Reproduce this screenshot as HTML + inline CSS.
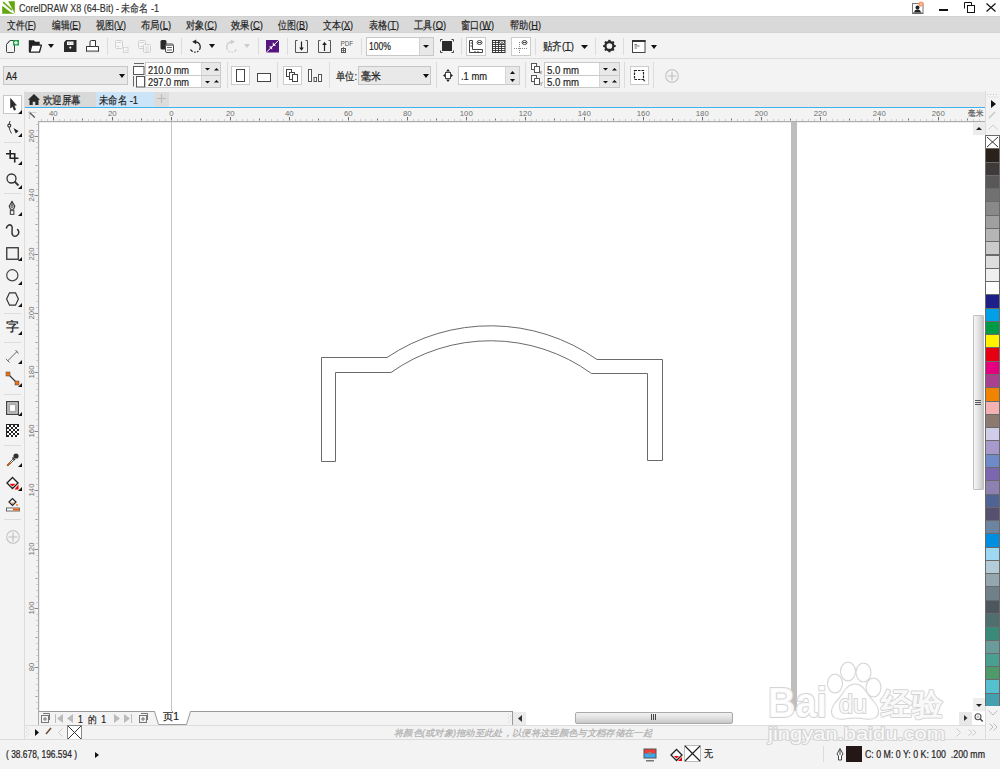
<!DOCTYPE html><html><head><meta charset="utf-8"><style>
*{margin:0;padding:0;box-sizing:border-box}
html,body{width:1000px;height:769px;overflow:hidden;background:#f3f3f3;font-family:"Liberation Sans",sans-serif;color:#222}
.a{position:absolute}
.t{position:absolute;white-space:nowrap;font-size:11px;line-height:12px;transform-origin:0 0;-webkit-text-stroke:0.2px currentColor}
svg{position:absolute;overflow:visible}
u{text-decoration:underline;text-underline-offset:0px}
</style></head><body><div class="a" style="left:0px;top:0px;width:1000px;height:16px;background:#fff"></div>
<svg style="left:2px;top:1px" width="13" height="13" viewBox="0 0 13 13"><path d="M6.2 0.2 H12.8 V12.4 Z" fill="#62a60e"/><path d="M0.2 4.8 V12.8 H12.4 L8.6 11.3 Z" fill="#62a60e"/><path d="M1.6 1.6 L9.6 8.6" stroke="#6cb020" stroke-width="1.7" stroke-linecap="round"/></svg>
<div class="t" id="t0" style="left:19px;top:2px;font-size:11px;color:#333;transform:scaleX(0.8200);">CorelDRAW X8 (64-Bit) - 未命名 -1</div>
<svg style="left:911px;top:1px" width="14" height="13"><rect x="1.5" y="2.5" width="10.5" height="10" fill="#fff" stroke="#777"/><circle cx="6.5" cy="6.5" r="2" fill="#222"/><path d="M3 11.5 Q3.5 8.5 6.5 8.5 Q9.5 8.5 10 11.5Z" fill="#222"/><path d="M2 12 H11.5" stroke="#555"/><circle cx="10" cy="3" r="2.6" fill="#f59a6a"/><circle cx="10" cy="3" r="1.2" fill="#fbc0a0"/></svg>
<div class="a" style="left:939px;top:9px;width:9px;height:2px;background:#111"></div>
<svg style="left:964px;top:2px" width="11" height="11"><path d="M0.5 6.5 V0.5 H7.5 V3" fill="none" stroke="#111"/><rect x="3.5" y="3.5" width="7" height="7" fill="none" stroke="#111"/></svg>
<svg style="left:986px;top:3px" width="10" height="9"><path d="M0.5 0.5 L9.5 8.5 M9.5 0.5 L0.5 8.5" stroke="#111" stroke-width="1.2"/></svg>
<div class="a" style="left:0px;top:16px;width:1000px;height:17px;background:#d9d9d9;border-top:1px solid #d2d2d2;border-bottom:1px solid #d4d4d4"></div>
<div class="t" id="t1" style="left:7px;top:19px;font-size:11px;color:#222;transform:scaleX(0.8038);">文件(<u>F</u>)</div>
<div class="t" id="t2" style="left:52px;top:19px;font-size:11px;color:#222;transform:scaleX(0.7905);">编辑(<u>E</u>)</div>
<div class="t" id="t3" style="left:96px;top:19px;font-size:11px;color:#222;transform:scaleX(0.8177);">视图(<u>V</u>)</div>
<div class="t" id="t4" style="left:141px;top:19px;font-size:11px;color:#222;transform:scaleX(0.8458);">布局(<u>L</u>)</div>
<div class="t" id="t5" style="left:186px;top:19px;font-size:11px;color:#222;transform:scaleX(0.8312);">对象(<u>C</u>)</div>
<div class="t" id="t6" style="left:231px;top:19px;font-size:11px;color:#222;transform:scaleX(0.8580);">效果(<u>C</u>)</div>
<div class="t" id="t7" style="left:278px;top:19px;font-size:11px;color:#222;transform:scaleX(0.8177);">位图(<u>B</u>)</div>
<div class="t" id="t8" style="left:323px;top:19px;font-size:11px;color:#222;transform:scaleX(0.8177);">文本(<u>X</u>)</div>
<div class="t" id="t9" style="left:369px;top:19px;font-size:11px;color:#222;transform:scaleX(0.8315);">表格(<u>T</u>)</div>
<div class="t" id="t10" style="left:414px;top:19px;font-size:11px;color:#222;transform:scaleX(0.8442);">工具(<u>O</u>)</div>
<div class="t" id="t11" style="left:461px;top:19px;font-size:11px;color:#222;transform:scaleX(0.8305);">窗口(<u>W</u>)</div>
<div class="t" id="t12" style="left:510px;top:19px;font-size:11px;color:#222;transform:scaleX(0.8312);">帮助(<u>H</u>)</div>
<div class="a" style="left:0px;top:58px;width:1000px;height:1px;background:#dcdcdc"></div>
<div class="a" style="left:107px;top:38px;width:1px;height:17px;background:#dcdcdc"></div>
<div class="a" style="left:181px;top:38px;width:1px;height:17px;background:#dcdcdc"></div>
<div class="a" style="left:258px;top:38px;width:1px;height:17px;background:#dcdcdc"></div>
<div class="a" style="left:287px;top:38px;width:1px;height:17px;background:#dcdcdc"></div>
<div class="a" style="left:361px;top:38px;width:1px;height:17px;background:#dcdcdc"></div>
<div class="a" style="left:461px;top:38px;width:1px;height:17px;background:#dcdcdc"></div>
<div class="a" style="left:535px;top:38px;width:1px;height:17px;background:#dcdcdc"></div>
<div class="a" style="left:595px;top:38px;width:1px;height:17px;background:#dcdcdc"></div>
<div class="a" style="left:623px;top:38px;width:1px;height:17px;background:#dcdcdc"></div>
<svg style="left:5px;top:40px" width="15" height="13" viewBox="0 0 15 13" ><path d="M5 0.5 H9.5 V11.5 Q9.5 12.5 8.5 12.5 H2.5 Q1.5 12.5 1.5 11.5 V4.5Z" fill="none" stroke="#444"/><path d="M1.5 4.5 L5 0.5" stroke="#444" fill="none"/><rect x="8" y="0" width="6" height="5.5" fill="#1ea04a"/><rect x="10.4" y="1" width="1.2" height="3.5" fill="#fff"/><rect x="9" y="2.2" width="4" height="1.2" fill="#fff"/></svg>
<svg style="left:29px;top:40px" width="13" height="13" viewBox="0 0 13 13" ><path d="M0.5 12 V1 H4.5 L6 2.5 H10 V5" fill="none" stroke="#222" stroke-width="1.4"/><path d="M0.5 1 H4.5 L6 2.5 H10 V5 H2.5 L0.5 11Z" fill="#222"/><path d="M0.8 12.2 L2.8 5.2 H12.4 L10.4 12.2Z" fill="#fff" stroke="#222" stroke-width="1.3" stroke-linejoin="round"/></svg>
<svg style="left:48px;top:44px" width="6" height="4" viewBox="0 0 6 4" ><path d="M0 0 H6 L3.0 4Z" fill="#111"/></svg>
<svg style="left:64px;top:40px" width="13" height="12" viewBox="0 0 13 12" ><path d="M2.2 0 H12.5 V12 H0 V2.2Z" fill="#2a2a2a"/><rect x="3" y="1.5" width="6.5" height="3.5" fill="#fff"/><rect x="4.5" y="2.3" width="1" height="2" fill="#999"/><rect x="7.5" y="2.3" width="1" height="2" fill="#bbb"/><circle cx="6.3" cy="7.6" r="1.1" fill="#fff"/></svg>
<svg style="left:86px;top:40px" width="13" height="13" viewBox="0 0 13 13" ><path d="M4 6.5 V2 Q4 0.5 5.5 0.5 H9.5 V6.5" fill="#fff" stroke="#333"/><path d="M0.5 6.5 H4 M9.5 6.5 H12.5 V11.5 H0.5 V6.5Z" fill="#fff" stroke="#333"/><rect x="1" y="10.3" width="11" height="1.8" fill="#888"/></svg>
<svg style="left:115px;top:40px" width="14" height="13" viewBox="0 0 14 13" ><rect x="0.5" y="0.5" width="7" height="8" rx="1" fill="#f6f6f6" stroke="#d0d0d0"/><path d="M2 2.5 H6 M2 6.5 H4" stroke="#d4d4d4"/><rect x="8.5" y="7.5" width="4.5" height="5" fill="#f6f6f6" stroke="#d6d6d6"/><path d="M10 10.5 H12" stroke="#ddd"/></svg>
<svg style="left:138px;top:40px" width="14" height="13" viewBox="0 0 14 13" ><rect x="0.5" y="0.5" width="7" height="8" rx="1" fill="#f6f6f6" stroke="#d0d0d0"/><path d="M2 2.5 H6 M2 6.5 H6" stroke="#d4d4d4"/><rect x="5.5" y="4.5" width="7" height="8" rx="1" fill="#f6f6f6" stroke="#d0d0d0"/><path d="M7 7 H11 M7 9 H11 M7 11 H11" stroke="#d8d8d8"/></svg>
<svg style="left:160px;top:40px" width="15" height="13" viewBox="0 0 15 13" ><rect x="0.5" y="0" width="6" height="9.5" rx="1.5" fill="#2a2a2a"/><rect x="5.5" y="4" width="8" height="8.5" rx="1.5" fill="#fff" stroke="#444"/><rect x="6" y="4.5" width="7" height="1.5" fill="#888"/><path d="M7 7.5 H12 M7 10 H12" stroke="#555" stroke-width="0.9"/></svg>
<svg style="left:189px;top:40px" width="14" height="13" viewBox="0 0 14 13" ><path d="M6 1.8 A5.2 5.2 0 1 1 1.5 9.5" fill="none" stroke="#222" stroke-width="1.3" stroke-dasharray="11 1.5 1.5 1.5 1.5 1.5"/><path d="M3.2 1.8 L7.2 -0.5 L7.2 4.2Z" fill="#222"/></svg>
<svg style="left:209px;top:44px" width="6" height="4" viewBox="0 0 6 4" ><path d="M0 0 H6 L3.0 4Z" fill="#111"/></svg>
<svg style="left:224px;top:40px" width="14" height="13" viewBox="0 0 14 13" ><path d="M8 1.8 A5.2 5.2 0 1 0 12.5 9.5" fill="none" stroke="#ccc" stroke-width="1.3" stroke-dasharray="11 1.5 1.5 1.5 1.5 1.5"/><path d="M10.8 1.8 L6.8 -0.5 L6.8 4.2Z" fill="#ccc"/></svg>
<svg style="left:244px;top:44px" width="6" height="4" viewBox="0 0 6 4" ><path d="M0 0 H6 L3.0 4Z" fill="#ccc"/></svg>
<svg style="left:266px;top:40px" width="13" height="13" viewBox="0 0 13 13" ><rect width="13" height="12.5" fill="#56167f"/><path d="M0.3 12.3 L12.7 0.3" stroke="#fff" stroke-width="1"/><path d="M6.8 2.6 V5.7 H10Z M6.1 9.6 V6.4 H2.9Z" fill="#fff"/></svg>
<svg style="left:295px;top:40px" width="13" height="13" viewBox="0 0 13 13" ><path d="M2.5 0.5 H0.5 V12.5 H12.5 V0.5 H10.5" fill="none" stroke="#555"/><path d="M6.5 1.5 V9" stroke="#222" stroke-width="1.2"/><path d="M4.2 7.5 L6.5 10.8 L8.8 7.5Z" fill="#222"/></svg>
<svg style="left:318px;top:40px" width="13" height="13" viewBox="0 0 13 13" ><path d="M2.5 0.5 H0.5 V12.5 H12.5 V0.5 H10.5" fill="none" stroke="#555"/><path d="M6.5 4 V11" stroke="#222" stroke-width="1.2"/><path d="M4.2 5 L6.5 1.8 L8.8 5Z" fill="#222"/></svg>
<svg style="left:340px;top:40px" width="14" height="7" viewBox="0 0 14 7" ><text x="0.5" y="6" font-family="Liberation Sans" font-size="7.2" fill="#555" textLength="12.5" lengthAdjust="spacingAndGlyphs">PDF</text></svg>
<svg style="left:341px;top:47px" width="5" height="6" viewBox="0 0 5 6" ><rect x="0.5" y="1.5" width="4" height="4" fill="none" stroke="#555"/><path d="M2.5 0 V6 M0 3.5 H5" stroke="#555" stroke-width="0.8"/></svg>
<div class="a" style="left:366px;top:37px;width:68px;height:19px;background:#fff;border:1px solid #c8c8c8"></div>
<div class="a" style="left:419px;top:38px;width:14px;height:17px;background:#e8e8e8;border-left:1px solid #d0d0d0"></div>
<svg style="left:423px;top:45px" width="6" height="3" viewBox="0 0 6 3" ><path d="M0 0 H6 L3.0 3Z" fill="#111"/></svg>
<div class="t" id="t13" style="left:369px;top:40px;font-size:11px;color:#222;transform:scaleX(0.7818);">100%</div>
<svg style="left:440px;top:39px" width="14" height="14" viewBox="0 0 14 14" ><rect x="2" y="2" width="10" height="10" fill="#2a2a2a"/><path d="M0.5 2.5 V0.5 H2.5 M11.5 0.5 H13.5 V2.5 M13.5 11.5 V13.5 H11.5 M2.5 13.5 H0.5 V11.5" fill="none" stroke="#444"/></svg>
<div class="a" style="left:466px;top:37px;width:20px;height:19px;background:#fff;border:1px solid #ccc"></div>
<svg style="left:469px;top:40px" width="14" height="13" viewBox="0 0 14 13" ><path d="M0.5 0.5 H3.5 V9.5 H13.5 V12.5 H0.5Z" fill="#fff" stroke="#444"/><path d="M1.5 3 H3 M1.5 6 H3 M6 11 V12 M9 11 V12" stroke="#444"/><ellipse cx="10.5" cy="2.5" rx="2.5" ry="2" fill="#fff" stroke="#444"/><path d="M9 2.5 H12" stroke="#444"/></svg>
<svg style="left:492px;top:40px" width="14" height="13" viewBox="0 0 14 13" ><rect x="0.5" y="0.5" width="12.5" height="12" fill="#fff" stroke="#333"/><path d="M0.5 2.5 H13 M0.5 4.5 H13 M0.5 6.5 H13 M0.5 8.5 H13 M0.5 10.5 H13 M3.5 0.5 V12.5 M6.5 0.5 V12.5 M9.5 0.5 V12.5" stroke="#333" stroke-width="0.9" fill="none"/><ellipse cx="10" cy="2.3" rx="2.6" ry="1.8" fill="#fff" stroke="#333" stroke-width="0.9"/><circle cx="10" cy="2.3" r="0.8" fill="#333"/></svg>
<div class="a" style="left:511px;top:37px;width:20px;height:19px;background:#fff;border:1px solid #ccc"></div>
<svg style="left:514px;top:40px" width="14" height="13" viewBox="0 0 14 13" ><path d="M5.5 2 V13 M0 8.5 H13" stroke="#888" stroke-dasharray="1 1" fill="none"/><ellipse cx="10.5" cy="2.5" rx="2.5" ry="2" fill="#fff" stroke="#444"/><path d="M9 2.5 H12" stroke="#444"/></svg>
<div class="t" id="t14" style="left:543px;top:40px;font-size:11px;color:#222;transform:scaleX(0.8592);">贴齐(<u>T</u>)</div>
<svg style="left:581px;top:45px" width="7" height="4" viewBox="0 0 7 4" ><path d="M0 0 H7 L3.5 4Z" fill="#111"/></svg>
<svg style="left:602px;top:40px" width="14" height="13" viewBox="0 0 14 13" ><rect x="6.3" y="-0.3" width="2.2" height="2.6" rx="0.6" fill="#2a2a2a" transform="rotate(0 7.4 6)"/><rect x="6.3" y="-0.3" width="2.2" height="2.6" rx="0.6" fill="#2a2a2a" transform="rotate(45 7.4 6)"/><rect x="6.3" y="-0.3" width="2.2" height="2.6" rx="0.6" fill="#2a2a2a" transform="rotate(90 7.4 6)"/><rect x="6.3" y="-0.3" width="2.2" height="2.6" rx="0.6" fill="#2a2a2a" transform="rotate(135 7.4 6)"/><rect x="6.3" y="-0.3" width="2.2" height="2.6" rx="0.6" fill="#2a2a2a" transform="rotate(180 7.4 6)"/><rect x="6.3" y="-0.3" width="2.2" height="2.6" rx="0.6" fill="#2a2a2a" transform="rotate(225 7.4 6)"/><rect x="6.3" y="-0.3" width="2.2" height="2.6" rx="0.6" fill="#2a2a2a" transform="rotate(270 7.4 6)"/><rect x="6.3" y="-0.3" width="2.2" height="2.6" rx="0.6" fill="#2a2a2a" transform="rotate(315 7.4 6)"/><circle cx="7.4" cy="6" r="4" fill="none" stroke="#2a2a2a" stroke-width="2.3"/></svg>
<svg style="left:632px;top:40px" width="14" height="13" viewBox="0 0 14 13" ><rect x="0.5" y="0.5" width="12.5" height="12" fill="#fff" stroke="#444" stroke-width="1"/><rect x="0" y="0" width="13.5" height="2" fill="#333"/><path d="M2.5 4.5 H5 M2.5 6 H7.5 M2.5 8 H5" stroke="#666" stroke-width="0.9"/></svg>
<svg style="left:651px;top:45px" width="6" height="4" viewBox="0 0 6 4" ><path d="M0 0 H6 L3.0 4Z" fill="#111"/></svg>
<div class="a" style="left:227px;top:62px;width:1px;height:26px;background:#dcdcdc"></div>
<div class="a" style="left:277px;top:62px;width:1px;height:26px;background:#dcdcdc"></div>
<div class="a" style="left:329px;top:62px;width:1px;height:26px;background:#dcdcdc"></div>
<div class="a" style="left:436px;top:62px;width:1px;height:26px;background:#dcdcdc"></div>
<div class="a" style="left:525px;top:62px;width:1px;height:26px;background:#dcdcdc"></div>
<div class="a" style="left:624px;top:62px;width:1px;height:26px;background:#dcdcdc"></div>
<div class="a" style="left:653px;top:62px;width:1px;height:26px;background:#dcdcdc"></div>
<div class="a" style="left:3px;top:66px;width:125px;height:19px;background:#e9e9e9;border:1px solid #c6c6c6"></div>
<div class="t" id="t15" style="left:6px;top:71px;font-size:10px;color:#222;transform:scaleX(0.8991);">A4</div>
<svg style="left:119px;top:74px" width="6" height="4" viewBox="0 0 6 4" ><path d="M0 0 H6 L3.0 4Z" fill="#111"/></svg>
<svg style="left:133px;top:63px" width="12" height="24" viewBox="0 0 12 24" ><path d="M1 0.5 H11" stroke="#666"/><rect x="0.5" y="3.5" width="10.5" height="8" fill="#fff" stroke="#555"/><path d="M0.5 13 V23.5" stroke="#666"/><rect x="3.5" y="13.5" width="8" height="10.5" fill="#fff" stroke="#555"/></svg>
<div class="a" style="left:145px;top:62px;width:76px;height:26px;background:#e8e8e8;border:1px solid #cacaca"></div>
<div class="a" style="left:146px;top:63px;width:56px;height:24px;background:#fff;border-right:1px solid #d6d6d6"></div>
<div class="a" style="left:146px;top:75px;width:74px;height:1px;background:#cacaca"></div>
<div class="t" id="t16" style="left:148px;top:64px;font-size:11px;line-height:13px;color:#222;transform:scaleX(0.8381);">210.0 mm</div>
<div class="t" id="t17" style="left:148px;top:76px;font-size:11px;line-height:13px;color:#222;transform:scaleX(0.8381);">297.0 mm</div>
<svg style="left:205px;top:68px" width="5" height="2.6" viewBox="0 0 5 2.6" ><path d="M0 0 H5 L2.5 2.6Z" fill="#111"/></svg>
<svg style="left:214px;top:67.8px" width="5" height="2.6" viewBox="0 0 5 2.6" ><path d="M0 2.6 H5 L2.5 0Z" fill="#111"/></svg>
<svg style="left:205px;top:80.5px" width="5" height="2.6" viewBox="0 0 5 2.6" ><path d="M0 0 H5 L2.5 2.6Z" fill="#111"/></svg>
<svg style="left:214px;top:80.3px" width="5" height="2.6" viewBox="0 0 5 2.6" ><path d="M0 2.6 H5 L2.5 0Z" fill="#111"/></svg>
<div class="a" style="left:544px;top:62px;width:76px;height:26px;background:#e8e8e8;border:1px solid #cacaca"></div>
<div class="a" style="left:545px;top:63px;width:55px;height:24px;background:#fff;border-right:1px solid #d6d6d6"></div>
<div class="a" style="left:545px;top:75px;width:74px;height:1px;background:#cacaca"></div>
<div class="t" id="t18" style="left:547px;top:64px;font-size:11px;line-height:13px;color:#222;transform:scaleX(0.8722);">5.0 mm</div>
<div class="t" id="t19" style="left:547px;top:76px;font-size:11px;line-height:13px;color:#222;transform:scaleX(0.8722);">5.0 mm</div>
<svg style="left:603px;top:68px" width="5" height="2.6" viewBox="0 0 5 2.6" ><path d="M0 0 H5 L2.5 2.6Z" fill="#111"/></svg>
<svg style="left:612px;top:67.8px" width="5" height="2.6" viewBox="0 0 5 2.6" ><path d="M0 2.6 H5 L2.5 0Z" fill="#111"/></svg>
<svg style="left:603px;top:80.5px" width="5" height="2.6" viewBox="0 0 5 2.6" ><path d="M0 0 H5 L2.5 2.6Z" fill="#111"/></svg>
<svg style="left:612px;top:80.3px" width="5" height="2.6" viewBox="0 0 5 2.6" ><path d="M0 2.6 H5 L2.5 0Z" fill="#111"/></svg>
<div class="a" style="left:231px;top:66px;width:19px;height:19px;background:#fff;border:1px solid #ccc"></div>
<svg style="left:236px;top:69px" width="9" height="13" viewBox="0 0 9 13" ><rect x="0.5" y="0.5" width="8" height="12" fill="#fff" stroke="#444"/></svg>
<svg style="left:257px;top:73px" width="14" height="9" viewBox="0 0 14 9" ><rect x="0.5" y="0.5" width="13" height="8" fill="#fff" stroke="#444"/></svg>
<div class="a" style="left:283px;top:66px;width:19px;height:19px;background:#fff;border:1px solid #ccc"></div>
<svg style="left:286px;top:69px" width="13" height="13" viewBox="0 0 13 13" ><rect x="0.5" y="0.5" width="5" height="7" fill="#fff" stroke="#444"/><rect x="3.5" y="3.5" width="5" height="7" fill="#fff" stroke="#444"/><rect x="6.5" y="5.5" width="5" height="7" fill="#fff" stroke="#444"/></svg>
<svg style="left:308px;top:69px" width="14" height="14" viewBox="0 0 14 14" ><rect x="0.5" y="0.5" width="3" height="12" fill="#fff" stroke="#555"/><rect x="6" y="8.5" width="2.5" height="4" fill="#fff" stroke="#555"/><rect x="10.5" y="5.5" width="3" height="7" fill="#fff" stroke="#555"/></svg>
<div class="t" id="t20" style="left:336px;top:70px;font-size:11px;color:#222;transform:scaleX(0.8379);">单位:</div>
<div class="a" style="left:358px;top:66px;width:73px;height:19px;background:#e9e9e9;border:1px solid #c6c6c6"></div>
<div class="t" id="t21" style="left:361px;top:70px;font-size:11px;color:#222;transform:scaleX(0.9091);">毫米</div>
<svg style="left:423px;top:74px" width="6" height="4" viewBox="0 0 6 4" ><path d="M0 0 H6 L3.0 4Z" fill="#111"/></svg>
<svg style="left:443px;top:69px" width="10" height="13" viewBox="0 0 10 13" ><path d="M5 0 L7 2.5 H3Z M5 13 L7 10.5 H3Z M0 6.5 L2.5 4.5 V8.5Z M10 6.5 L7.5 4.5 V8.5Z" fill="#222"/><rect x="2.5" y="3.5" width="5" height="6" fill="#fff" stroke="#444"/></svg>
<div class="a" style="left:458px;top:66px;width:62px;height:19px;background:#e8e8e8;border:1px solid #cacaca"></div>
<div class="a" style="left:459px;top:67px;width:47px;height:17px;background:#fff;border-right:1px solid #d6d6d6"></div>
<div class="t" id="t22" style="left:461px;top:70px;font-size:11px;color:#222;transform:scaleX(0.8507);">.1 mm</div>
<svg style="left:510px;top:71px" width="5" height="3" viewBox="0 0 5 3" ><path d="M0 3 H5 L2.5 0Z" fill="#111"/></svg>
<svg style="left:510px;top:79px" width="5" height="3" viewBox="0 0 5 3" ><path d="M0 0 H5 L2.5 3Z" fill="#111"/></svg>
<svg style="left:531px;top:63px" width="12" height="24" viewBox="0 0 12 24" ><rect x="0.5" y="0.5" width="5" height="6" fill="#fff" stroke="#555"/><rect x="3.5" y="3.5" width="5" height="6" fill="#fff" stroke="#555"/><text x="8.5" y="11" font-size="5" fill="#555" font-family="Liberation Sans">x</text><rect x="0.5" y="12.5" width="5" height="6" fill="#fff" stroke="#555"/><rect x="3.5" y="15.5" width="5" height="6" fill="#fff" stroke="#555"/><text x="8.5" y="23" font-size="5" fill="#555" font-family="Liberation Sans">Y</text></svg>
<div class="a" style="left:630px;top:66px;width:19px;height:19px;background:#fff;border:1px solid #ccc"></div>
<svg style="left:633px;top:69px" width="13" height="13" viewBox="0 0 13 13" ><rect x="1.5" y="1.5" width="9" height="9" fill="none" stroke="#222" stroke-width="1.2" stroke-dasharray="2.5 1"/><path d="M10 9 L12.5 12.5 L10.5 12Z" fill="#222"/></svg>
<svg style="left:665px;top:69px" width="14" height="14" viewBox="0 0 14 14" ><circle cx="7" cy="7" r="6.3" fill="none" stroke="#c8c8c8" stroke-width="1.2"/><path d="M7 2.5 V11.5 M2.5 7 H11.5" stroke="#c0c0c0" stroke-width="1.2"/></svg>
<div class="a" style="left:24px;top:91px;width:1px;height:648px;background:#dcdcdc"></div>
<div class="a" style="left:4px;top:142px;width:17px;height:1px;background:#dcdcdc"></div>
<div class="a" style="left:4px;top:193px;width:17px;height:1px;background:#dcdcdc"></div>
<div class="a" style="left:4px;top:313px;width:17px;height:1px;background:#dcdcdc"></div>
<div class="a" style="left:4px;top:342px;width:17px;height:1px;background:#dcdcdc"></div>
<div class="a" style="left:4px;top:394px;width:17px;height:1px;background:#dcdcdc"></div>
<div class="a" style="left:4px;top:445px;width:17px;height:1px;background:#dcdcdc"></div>
<div class="a" style="left:4px;top:519px;width:17px;height:1px;background:#dcdcdc"></div>
<div class="a" style="left:3px;top:95px;width:19px;height:19px;background:#fff;border:1px solid #c8c8c8"></div>
<svg style="left:10px;top:98px" width="7" height="13" viewBox="0 0 7 13" ><path d="M0.6 0.6 L6.4 7.2 H4 L5.6 11.6 L4.2 12.2 L2.6 8.2 L0.6 10Z" fill="#2a2a2a" stroke="#2a2a2a" stroke-width="0.7" stroke-linejoin="round"/></svg>
<svg style="left:17.5px;top:110px" width="4" height="4" viewBox="0 0 4 4" ><path d="M4 0 V4 H0Z" fill="#111"/></svg>
<svg style="left:6px;top:121px" width="15" height="16" viewBox="0 0 15 16" ><path d="M4 0 Q1.5 6 5.5 12.5" fill="none" stroke="#444"/><circle cx="3.3" cy="4.6" r="1.5" fill="#fff" stroke="#333" stroke-width="1.1"/><path d="M7.5 7 L12.5 10 L9.8 12.5Z" fill="#222"/></svg>
<svg style="left:17.5px;top:133px" width="4" height="4" viewBox="0 0 4 4" ><path d="M4 0 V4 H0Z" fill="#111"/></svg>
<svg style="left:6px;top:150px" width="14" height="14" viewBox="0 0 14 14" ><path d="M4.2 0 V8.3 H12.4 M0 3.7 H8.7 V12.6" fill="none" stroke="#222" stroke-width="1.6"/></svg>
<svg style="left:17.5px;top:161px" width="4" height="4" viewBox="0 0 4 4" ><path d="M4 0 V4 H0Z" fill="#111"/></svg>
<svg style="left:6px;top:173px" width="14" height="15" viewBox="0 0 14 15" ><circle cx="5.5" cy="5.5" r="4.5" fill="none" stroke="#333" stroke-width="1.3"/><path d="M8.5 8.5 L12.5 12.5" stroke="#333" stroke-width="1.8"/></svg>
<svg style="left:17.5px;top:185px" width="4" height="4" viewBox="0 0 4 4" ><path d="M4 0 V4 H0Z" fill="#111"/></svg>
<svg style="left:8px;top:201px" width="8" height="14" viewBox="0 0 8 14" ><path d="M4 0.5 L6.8 5 L5.6 8.3 H2.4 L1.2 5Z" fill="#fff" stroke="#333" stroke-width="1.1"/><circle cx="4" cy="5.2" r="1.2" fill="none" stroke="#333" stroke-width="0.9"/><path d="M4 0.5 V4" stroke="#333"/><rect x="2.3" y="9.7" width="3.6" height="3.6" fill="#fff" stroke="#333"/></svg>
<svg style="left:17.5px;top:212px" width="4" height="4" viewBox="0 0 4 4" ><path d="M4 0 V4 H0Z" fill="#111"/></svg>
<svg style="left:6px;top:220px" width="14" height="17" viewBox="0 0 14 17" ><path d="M0.3 8.5 C1 5 4.5 3.5 6 6.5 C7 9 4.5 13 7 15.5 C9.5 17.5 13 15 12.8 12 C12.7 10.5 11.5 9.5 11 9.3" fill="none" stroke="#333" stroke-width="1.5"/></svg>
<svg style="left:6px;top:247px" width="13" height="13" viewBox="0 0 13 13" ><rect x="0.75" y="0.75" width="11.5" height="11.5" fill="none" stroke="#333" stroke-width="1.3"/></svg>
<svg style="left:17.5px;top:257px" width="4" height="4" viewBox="0 0 4 4" ><path d="M4 0 V4 H0Z" fill="#111"/></svg>
<svg style="left:6px;top:269px" width="13" height="14" viewBox="0 0 13 14" ><circle cx="6.3" cy="6.3" r="5.6" fill="none" stroke="#444" stroke-width="1.2"/></svg>
<svg style="left:17.5px;top:281px" width="4" height="4" viewBox="0 0 4 4" ><path d="M4 0 V4 H0Z" fill="#111"/></svg>
<svg style="left:6px;top:292px" width="13" height="14" viewBox="0 0 13 14" ><path d="M3.5 0.8 H9.5 L12.4 7 L9.5 13.2 H3.5 L0.6 7Z" fill="none" stroke="#333" stroke-width="1.2"/></svg>
<svg style="left:17.5px;top:303px" width="4" height="4" viewBox="0 0 4 4" ><path d="M4 0 V4 H0Z" fill="#111"/></svg>
<div class="t" style="left:6px;top:319px;font-size:13px;line-height:15px;color:#222;-webkit-text-stroke:0.3px #222">字</div>
<svg style="left:17.5px;top:331px" width="4" height="4" viewBox="0 0 4 4" ><path d="M4 0 V4 H0Z" fill="#111"/></svg>
<svg style="left:6px;top:350px" width="13" height="13" viewBox="0 0 13 13" ><path d="M1.5 11 L11 1.5 M0 9 L3.5 12.5 M9.5 0 L12.5 3.5" stroke="#666" stroke-width="1"/></svg>
<svg style="left:17.5px;top:360px" width="4" height="4" viewBox="0 0 4 4" ><path d="M4 0 V4 H0Z" fill="#111"/></svg>
<svg style="left:6px;top:372px" width="13" height="14" viewBox="0 0 13 14" ><path d="M2 2 L11 11" stroke="#333" stroke-width="1.1"/><rect x="0" y="0" width="4" height="4" fill="#f07010" stroke="#444" stroke-width="0.5"/><rect x="9" y="9" width="4" height="4" fill="#f07010" stroke="#444" stroke-width="0.5"/></svg>
<svg style="left:17.5px;top:383px" width="4" height="4" viewBox="0 0 4 4" ><path d="M4 0 V4 H0Z" fill="#111"/></svg>
<svg style="left:6px;top:401px" width="13" height="14" viewBox="0 0 13 14" ><rect x="0.5" y="0.5" width="12" height="13" fill="#888" stroke="#444"/><rect x="1.5" y="1.5" width="10" height="11" fill="#ddd"/><rect x="2.5" y="2.5" width="8" height="9" fill="#888"/><rect x="3.5" y="3.5" width="6" height="7" fill="#eee" stroke="#aaa" stroke-width="1"/><rect x="4.5" y="4.5" width="4" height="5" fill="#fff"/></svg>
<svg style="left:17.5px;top:412px" width="4" height="4" viewBox="0 0 4 4" ><path d="M4 0 V4 H0Z" fill="#111"/></svg>
<svg style="left:6px;top:424px" width="13" height="13" viewBox="0 0 13 13" ><rect width="13" height="13" fill="#222"/><rect x="1" y="1" width="2" height="2" fill="#fff"/><rect x="1" y="5" width="2" height="2" fill="#fff"/><rect x="1" y="9" width="2" height="2" fill="#fff"/><rect x="3" y="3" width="2" height="2" fill="#fff"/><rect x="3" y="7" width="2" height="2" fill="#fff"/><rect x="3" y="11" width="2" height="2" fill="#fff"/><rect x="5" y="1" width="2" height="2" fill="#fff"/><rect x="5" y="5" width="2" height="2" fill="#fff"/><rect x="5" y="9" width="2" height="2" fill="#fff"/><rect x="7" y="3" width="2" height="2" fill="#fff"/><rect x="7" y="7" width="2" height="2" fill="#fff"/><rect x="7" y="11" width="2" height="2" fill="#fff"/><rect x="9" y="1" width="2" height="2" fill="#fff"/><rect x="9" y="5" width="2" height="2" fill="#fff"/><rect x="9" y="9" width="2" height="2" fill="#fff"/><rect x="11" y="3" width="2" height="2" fill="#fff"/><rect x="11" y="7" width="2" height="2" fill="#fff"/><rect x="11" y="11" width="2" height="2" fill="#fff"/></svg>
<svg style="left:6px;top:453px" width="13" height="14" viewBox="0 0 13 14" ><path d="M1.5 12.8 L1 12 L7.5 5.5 L8.5 6.5 L2 13Z" fill="#fff" stroke="#444" stroke-width="0.9"/><path d="M1.6 12.4 L4.5 9.5" stroke="#e06010" stroke-width="1.6"/><circle cx="10" cy="3" r="2.6" fill="#333"/><path d="M6.5 4.5 L9 7" stroke="#333" stroke-width="1.5"/></svg>
<svg style="left:17.5px;top:463px" width="4" height="4" viewBox="0 0 4 4" ><path d="M4 0 V4 H0Z" fill="#111"/></svg>
<svg style="left:6px;top:476px" width="14" height="14" viewBox="0 0 14 14" ><path d="M1 7 L6.5 1.5 L12 7 L6.5 12.5Z" fill="#fff" stroke="#222" stroke-width="1.4"/><path d="M3.5 7.8 H9.5 L6.5 10.5Z" fill="#e00"/><path d="M12.5 8.5 V13.5 H8.5Z" fill="#e00"/></svg>
<svg style="left:17.5px;top:487px" width="4" height="4" viewBox="0 0 4 4" ><path d="M4 0 V4 H0Z" fill="#111"/></svg>
<svg style="left:6px;top:497px" width="14" height="15" viewBox="0 0 14 15" ><path d="M3 5 L6.5 1.5 L10 5 L6.5 8.5Z" fill="#fff" stroke="#222" stroke-width="1.2"/><path d="M5 5.5 H8 L6.5 7Z" fill="#f07010"/><rect x="0.5" y="11" width="13" height="3" fill="#fff" stroke="#444" stroke-width="0.8"/><rect x="7" y="11.5" width="6.5" height="2" fill="#e86010"/><circle cx="11" cy="8" r="0.9" fill="#f07010"/></svg>
<svg style="left:6px;top:530px" width="14" height="14" viewBox="0 0 14 14" ><circle cx="7" cy="7" r="6.3" fill="none" stroke="#c8c8c8" stroke-width="1.2"/><path d="M7 2.5 V11.5 M2.5 7 H11.5" stroke="#c0c0c0" stroke-width="1.2"/></svg>
<div class="a" style="left:25px;top:92px;width:960px;height:15px;background:#e8e8e8"></div>
<div class="a" style="left:25px;top:92px;width:71px;height:15px;background:#d9d9d9"></div>
<div class="a" style="left:96px;top:92px;width:58px;height:15px;background:#cce4f7"></div>
<div class="a" style="left:154px;top:92px;width:15px;height:15px;background:#dcdcdc"></div>
<svg style="left:28px;top:94px" width="12" height="11"><path d="M6 0 L12 5.8 L10.5 5.8 L10.5 11 L7.3 11 L7.3 7.8 L4.7 7.8 L4.7 11 L1.5 11 L1.5 5.8 L0 5.8Z" fill="#2a2a2a"/></svg>
<div class="t" id="t23" style="left:43px;top:94px;font-size:11px;color:#222;transform:scaleX(0.8636);">欢迎屏幕</div>
<div class="t" id="t24" style="left:99px;top:94px;font-size:11px;color:#222;transform:scaleX(0.8507);">未命名 -1</div>
<svg style="left:156px;top:93px" width="11" height="11"><path d="M5.5 1 V10 M1 5.5 H10" stroke="#bbb" stroke-width="1.2"/></svg>
<div class="a" style="left:25px;top:107px;width:960px;height:1px;background:#3cb2ef"></div>
<div class="a" style="left:25px;top:108px;width:960px;height:13px;background:#f3f3f3"></div>
<div class="a" style="left:25px;top:108px;width:13px;height:616px;background:#f3f3f3"></div>
<div class="a" style="left:38px;top:121px;width:1px;height:604px;background:#acacac"></div>
<svg style="left:0;top:0" width="1000" height="130"><g><line x1="41.5" y1="119" x2="41.5" y2="121" stroke="#cfcfcf"/><line x1="47.5" y1="119" x2="47.5" y2="121" stroke="#cfcfcf"/><line x1="53.5" y1="117" x2="53.5" y2="120.5" stroke="#707070"/><line x1="59.5" y1="119" x2="59.5" y2="121" stroke="#cfcfcf"/><line x1="64.5" y1="119" x2="64.5" y2="121" stroke="#cfcfcf"/><line x1="70.5" y1="119" x2="70.5" y2="121" stroke="#cfcfcf"/><line x1="76.5" y1="119" x2="76.5" y2="121" stroke="#cfcfcf"/><line x1="82.5" y1="118.5" x2="82.5" y2="120.5" stroke="#777"/><line x1="88.5" y1="119" x2="88.5" y2="121" stroke="#cfcfcf"/><line x1="94.5" y1="119" x2="94.5" y2="121" stroke="#cfcfcf"/><line x1="100.5" y1="119" x2="100.5" y2="121" stroke="#cfcfcf"/><line x1="106.5" y1="119" x2="106.5" y2="121" stroke="#cfcfcf"/><line x1="112.5" y1="117" x2="112.5" y2="120.5" stroke="#707070"/><line x1="118.5" y1="119" x2="118.5" y2="121" stroke="#cfcfcf"/><line x1="124.5" y1="119" x2="124.5" y2="121" stroke="#cfcfcf"/><line x1="129.5" y1="119" x2="129.5" y2="121" stroke="#cfcfcf"/><line x1="135.5" y1="119" x2="135.5" y2="121" stroke="#cfcfcf"/><line x1="141.5" y1="118.5" x2="141.5" y2="120.5" stroke="#777"/><line x1="147.5" y1="119" x2="147.5" y2="121" stroke="#cfcfcf"/><line x1="153.5" y1="119" x2="153.5" y2="121" stroke="#cfcfcf"/><line x1="159.5" y1="119" x2="159.5" y2="121" stroke="#cfcfcf"/><line x1="165.5" y1="119" x2="165.5" y2="121" stroke="#cfcfcf"/><line x1="171.5" y1="117" x2="171.5" y2="120.5" stroke="#707070"/><line x1="177.5" y1="119" x2="177.5" y2="121" stroke="#cfcfcf"/><line x1="182.5" y1="119" x2="182.5" y2="121" stroke="#cfcfcf"/><line x1="188.5" y1="119" x2="188.5" y2="121" stroke="#cfcfcf"/><line x1="194.5" y1="119" x2="194.5" y2="121" stroke="#cfcfcf"/><line x1="200.5" y1="118.5" x2="200.5" y2="120.5" stroke="#777"/><line x1="206.5" y1="119" x2="206.5" y2="121" stroke="#cfcfcf"/><line x1="212.5" y1="119" x2="212.5" y2="121" stroke="#cfcfcf"/><line x1="218.5" y1="119" x2="218.5" y2="121" stroke="#cfcfcf"/><line x1="224.5" y1="119" x2="224.5" y2="121" stroke="#cfcfcf"/><line x1="230.5" y1="117" x2="230.5" y2="120.5" stroke="#707070"/><line x1="236.5" y1="119" x2="236.5" y2="121" stroke="#cfcfcf"/><line x1="242.5" y1="119" x2="242.5" y2="121" stroke="#cfcfcf"/><line x1="247.5" y1="119" x2="247.5" y2="121" stroke="#cfcfcf"/><line x1="253.5" y1="119" x2="253.5" y2="121" stroke="#cfcfcf"/><line x1="259.5" y1="118.5" x2="259.5" y2="120.5" stroke="#777"/><line x1="265.5" y1="119" x2="265.5" y2="121" stroke="#cfcfcf"/><line x1="271.5" y1="119" x2="271.5" y2="121" stroke="#cfcfcf"/><line x1="277.5" y1="119" x2="277.5" y2="121" stroke="#cfcfcf"/><line x1="283.5" y1="119" x2="283.5" y2="121" stroke="#cfcfcf"/><line x1="289.5" y1="117" x2="289.5" y2="120.5" stroke="#707070"/><line x1="295.5" y1="119" x2="295.5" y2="121" stroke="#cfcfcf"/><line x1="300.5" y1="119" x2="300.5" y2="121" stroke="#cfcfcf"/><line x1="306.5" y1="119" x2="306.5" y2="121" stroke="#cfcfcf"/><line x1="312.5" y1="119" x2="312.5" y2="121" stroke="#cfcfcf"/><line x1="318.5" y1="118.5" x2="318.5" y2="120.5" stroke="#777"/><line x1="324.5" y1="119" x2="324.5" y2="121" stroke="#cfcfcf"/><line x1="330.5" y1="119" x2="330.5" y2="121" stroke="#cfcfcf"/><line x1="336.5" y1="119" x2="336.5" y2="121" stroke="#cfcfcf"/><line x1="342.5" y1="119" x2="342.5" y2="121" stroke="#cfcfcf"/><line x1="348.5" y1="117" x2="348.5" y2="120.5" stroke="#707070"/><line x1="354.5" y1="119" x2="354.5" y2="121" stroke="#cfcfcf"/><line x1="360.5" y1="119" x2="360.5" y2="121" stroke="#cfcfcf"/><line x1="365.5" y1="119" x2="365.5" y2="121" stroke="#cfcfcf"/><line x1="371.5" y1="119" x2="371.5" y2="121" stroke="#cfcfcf"/><line x1="377.5" y1="118.5" x2="377.5" y2="120.5" stroke="#777"/><line x1="383.5" y1="119" x2="383.5" y2="121" stroke="#cfcfcf"/><line x1="389.5" y1="119" x2="389.5" y2="121" stroke="#cfcfcf"/><line x1="395.5" y1="119" x2="395.5" y2="121" stroke="#cfcfcf"/><line x1="401.5" y1="119" x2="401.5" y2="121" stroke="#cfcfcf"/><line x1="407.5" y1="117" x2="407.5" y2="120.5" stroke="#707070"/><line x1="413.5" y1="119" x2="413.5" y2="121" stroke="#cfcfcf"/><line x1="418.5" y1="119" x2="418.5" y2="121" stroke="#cfcfcf"/><line x1="424.5" y1="119" x2="424.5" y2="121" stroke="#cfcfcf"/><line x1="430.5" y1="119" x2="430.5" y2="121" stroke="#cfcfcf"/><line x1="436.5" y1="118.5" x2="436.5" y2="120.5" stroke="#777"/><line x1="442.5" y1="119" x2="442.5" y2="121" stroke="#cfcfcf"/><line x1="448.5" y1="119" x2="448.5" y2="121" stroke="#cfcfcf"/><line x1="454.5" y1="119" x2="454.5" y2="121" stroke="#cfcfcf"/><line x1="460.5" y1="119" x2="460.5" y2="121" stroke="#cfcfcf"/><line x1="466.5" y1="117" x2="466.5" y2="120.5" stroke="#707070"/><line x1="472.5" y1="119" x2="472.5" y2="121" stroke="#cfcfcf"/><line x1="478.5" y1="119" x2="478.5" y2="121" stroke="#cfcfcf"/><line x1="483.5" y1="119" x2="483.5" y2="121" stroke="#cfcfcf"/><line x1="489.5" y1="119" x2="489.5" y2="121" stroke="#cfcfcf"/><line x1="495.5" y1="118.5" x2="495.5" y2="120.5" stroke="#777"/><line x1="501.5" y1="119" x2="501.5" y2="121" stroke="#cfcfcf"/><line x1="507.5" y1="119" x2="507.5" y2="121" stroke="#cfcfcf"/><line x1="513.5" y1="119" x2="513.5" y2="121" stroke="#cfcfcf"/><line x1="519.5" y1="119" x2="519.5" y2="121" stroke="#cfcfcf"/><line x1="525.5" y1="117" x2="525.5" y2="120.5" stroke="#707070"/><line x1="531.5" y1="119" x2="531.5" y2="121" stroke="#cfcfcf"/><line x1="536.5" y1="119" x2="536.5" y2="121" stroke="#cfcfcf"/><line x1="542.5" y1="119" x2="542.5" y2="121" stroke="#cfcfcf"/><line x1="548.5" y1="119" x2="548.5" y2="121" stroke="#cfcfcf"/><line x1="554.5" y1="118.5" x2="554.5" y2="120.5" stroke="#777"/><line x1="560.5" y1="119" x2="560.5" y2="121" stroke="#cfcfcf"/><line x1="566.5" y1="119" x2="566.5" y2="121" stroke="#cfcfcf"/><line x1="572.5" y1="119" x2="572.5" y2="121" stroke="#cfcfcf"/><line x1="578.5" y1="119" x2="578.5" y2="121" stroke="#cfcfcf"/><line x1="584.5" y1="117" x2="584.5" y2="120.5" stroke="#707070"/><line x1="590.5" y1="119" x2="590.5" y2="121" stroke="#cfcfcf"/><line x1="596.5" y1="119" x2="596.5" y2="121" stroke="#cfcfcf"/><line x1="601.5" y1="119" x2="601.5" y2="121" stroke="#cfcfcf"/><line x1="607.5" y1="119" x2="607.5" y2="121" stroke="#cfcfcf"/><line x1="613.5" y1="118.5" x2="613.5" y2="120.5" stroke="#777"/><line x1="619.5" y1="119" x2="619.5" y2="121" stroke="#cfcfcf"/><line x1="625.5" y1="119" x2="625.5" y2="121" stroke="#cfcfcf"/><line x1="631.5" y1="119" x2="631.5" y2="121" stroke="#cfcfcf"/><line x1="637.5" y1="119" x2="637.5" y2="121" stroke="#cfcfcf"/><line x1="643.5" y1="117" x2="643.5" y2="120.5" stroke="#707070"/><line x1="649.5" y1="119" x2="649.5" y2="121" stroke="#cfcfcf"/><line x1="654.5" y1="119" x2="654.5" y2="121" stroke="#cfcfcf"/><line x1="660.5" y1="119" x2="660.5" y2="121" stroke="#cfcfcf"/><line x1="666.5" y1="119" x2="666.5" y2="121" stroke="#cfcfcf"/><line x1="672.5" y1="118.5" x2="672.5" y2="120.5" stroke="#777"/><line x1="678.5" y1="119" x2="678.5" y2="121" stroke="#cfcfcf"/><line x1="684.5" y1="119" x2="684.5" y2="121" stroke="#cfcfcf"/><line x1="690.5" y1="119" x2="690.5" y2="121" stroke="#cfcfcf"/><line x1="696.5" y1="119" x2="696.5" y2="121" stroke="#cfcfcf"/><line x1="702.5" y1="117" x2="702.5" y2="120.5" stroke="#707070"/><line x1="708.5" y1="119" x2="708.5" y2="121" stroke="#cfcfcf"/><line x1="714.5" y1="119" x2="714.5" y2="121" stroke="#cfcfcf"/><line x1="719.5" y1="119" x2="719.5" y2="121" stroke="#cfcfcf"/><line x1="725.5" y1="119" x2="725.5" y2="121" stroke="#cfcfcf"/><line x1="731.5" y1="118.5" x2="731.5" y2="120.5" stroke="#777"/><line x1="737.5" y1="119" x2="737.5" y2="121" stroke="#cfcfcf"/><line x1="743.5" y1="119" x2="743.5" y2="121" stroke="#cfcfcf"/><line x1="749.5" y1="119" x2="749.5" y2="121" stroke="#cfcfcf"/><line x1="755.5" y1="119" x2="755.5" y2="121" stroke="#cfcfcf"/><line x1="761.5" y1="117" x2="761.5" y2="120.5" stroke="#707070"/><line x1="767.5" y1="119" x2="767.5" y2="121" stroke="#cfcfcf"/><line x1="773.5" y1="119" x2="773.5" y2="121" stroke="#cfcfcf"/><line x1="778.5" y1="119" x2="778.5" y2="121" stroke="#cfcfcf"/><line x1="784.5" y1="119" x2="784.5" y2="121" stroke="#cfcfcf"/><line x1="790.5" y1="118.5" x2="790.5" y2="120.5" stroke="#777"/><line x1="796.5" y1="119" x2="796.5" y2="121" stroke="#cfcfcf"/><line x1="802.5" y1="119" x2="802.5" y2="121" stroke="#cfcfcf"/><line x1="808.5" y1="119" x2="808.5" y2="121" stroke="#cfcfcf"/><line x1="814.5" y1="119" x2="814.5" y2="121" stroke="#cfcfcf"/><line x1="820.5" y1="117" x2="820.5" y2="120.5" stroke="#707070"/><line x1="826.5" y1="119" x2="826.5" y2="121" stroke="#cfcfcf"/><line x1="832.5" y1="119" x2="832.5" y2="121" stroke="#cfcfcf"/><line x1="837.5" y1="119" x2="837.5" y2="121" stroke="#cfcfcf"/><line x1="843.5" y1="119" x2="843.5" y2="121" stroke="#cfcfcf"/><line x1="849.5" y1="118.5" x2="849.5" y2="120.5" stroke="#777"/><line x1="855.5" y1="119" x2="855.5" y2="121" stroke="#cfcfcf"/><line x1="861.5" y1="119" x2="861.5" y2="121" stroke="#cfcfcf"/><line x1="867.5" y1="119" x2="867.5" y2="121" stroke="#cfcfcf"/><line x1="873.5" y1="119" x2="873.5" y2="121" stroke="#cfcfcf"/><line x1="879.5" y1="117" x2="879.5" y2="120.5" stroke="#707070"/><line x1="885.5" y1="119" x2="885.5" y2="121" stroke="#cfcfcf"/><line x1="891.5" y1="119" x2="891.5" y2="121" stroke="#cfcfcf"/><line x1="896.5" y1="119" x2="896.5" y2="121" stroke="#cfcfcf"/><line x1="902.5" y1="119" x2="902.5" y2="121" stroke="#cfcfcf"/><line x1="908.5" y1="118.5" x2="908.5" y2="120.5" stroke="#777"/><line x1="914.5" y1="119" x2="914.5" y2="121" stroke="#cfcfcf"/><line x1="920.5" y1="119" x2="920.5" y2="121" stroke="#cfcfcf"/><line x1="926.5" y1="119" x2="926.5" y2="121" stroke="#cfcfcf"/><line x1="932.5" y1="119" x2="932.5" y2="121" stroke="#cfcfcf"/><line x1="938.5" y1="117" x2="938.5" y2="120.5" stroke="#707070"/><line x1="944.5" y1="119" x2="944.5" y2="121" stroke="#cfcfcf"/><line x1="950.5" y1="119" x2="950.5" y2="121" stroke="#cfcfcf"/><line x1="955.5" y1="119" x2="955.5" y2="121" stroke="#cfcfcf"/><line x1="961.5" y1="119" x2="961.5" y2="121" stroke="#cfcfcf"/><line x1="967.5" y1="118.5" x2="967.5" y2="120.5" stroke="#777"/><line x1="973.5" y1="119" x2="973.5" y2="121" stroke="#cfcfcf"/><line x1="979.5" y1="119" x2="979.5" y2="121" stroke="#cfcfcf"/></g><g font-family="Liberation Sans" font-size="7.8" fill="#707070"><text x="53.3" y="116" text-anchor="middle">40</text><text x="112.3" y="116" text-anchor="middle">20</text><text x="171.3" y="116" text-anchor="middle">0</text><text x="230.3" y="116" text-anchor="middle">20</text><text x="289.3" y="116" text-anchor="middle">40</text><text x="348.3" y="116" text-anchor="middle">60</text><text x="407.3" y="116" text-anchor="middle">80</text><text x="466.3" y="116" text-anchor="middle">100</text><text x="525.3" y="116" text-anchor="middle">120</text><text x="584.3" y="116" text-anchor="middle">140</text><text x="643.3" y="116" text-anchor="middle">160</text><text x="702.3" y="116" text-anchor="middle">180</text><text x="761.3" y="116" text-anchor="middle">200</text><text x="820.3" y="116" text-anchor="middle">220</text><text x="879.3" y="116" text-anchor="middle">240</text><text x="938.3" y="116" text-anchor="middle">260</text></g></svg>
<div class="a" style="left:38px;top:121px;width:947px;height:1px;background:#acacac"></div>
<div class="t" id="t25" style="left:968px;top:109px;font-size:8px;line-height:9px;color:#666;transform:scaleX(0.9375);">毫米</div>
<svg style="left:27px;top:110px" width="11" height="10"><path d="M1 2.5 H9.5 M2.5 1 V9" stroke="#cfcfcf" stroke-width="1.2" fill="none"/><path d="M2.8 2.8 L7.8 7.5" stroke="#555" stroke-width="1.3"/></svg>
<svg style="left:0;top:0" width="50" height="769"><g><line x1="36" y1="124.5" x2="38" y2="124.5" stroke="#cfcfcf"/><line x1="36" y1="130.5" x2="38" y2="130.5" stroke="#cfcfcf"/><line x1="34.5" y1="136.5" x2="38" y2="136.5" stroke="#8a8a8a"/><line x1="36" y1="142.5" x2="38" y2="142.5" stroke="#cfcfcf"/><line x1="36" y1="147.5" x2="38" y2="147.5" stroke="#cfcfcf"/><line x1="36" y1="153.5" x2="38" y2="153.5" stroke="#cfcfcf"/><line x1="36" y1="159.5" x2="38" y2="159.5" stroke="#cfcfcf"/><line x1="35.5" y1="165.5" x2="37.5" y2="165.5" stroke="#999"/><line x1="36" y1="171.5" x2="38" y2="171.5" stroke="#cfcfcf"/><line x1="36" y1="177.5" x2="38" y2="177.5" stroke="#cfcfcf"/><line x1="36" y1="183.5" x2="38" y2="183.5" stroke="#cfcfcf"/><line x1="36" y1="189.5" x2="38" y2="189.5" stroke="#cfcfcf"/><line x1="34.5" y1="195.5" x2="38" y2="195.5" stroke="#8a8a8a"/><line x1="36" y1="201.5" x2="38" y2="201.5" stroke="#cfcfcf"/><line x1="36" y1="206.5" x2="38" y2="206.5" stroke="#cfcfcf"/><line x1="36" y1="212.5" x2="38" y2="212.5" stroke="#cfcfcf"/><line x1="36" y1="218.5" x2="38" y2="218.5" stroke="#cfcfcf"/><line x1="35.5" y1="224.5" x2="37.5" y2="224.5" stroke="#999"/><line x1="36" y1="230.5" x2="38" y2="230.5" stroke="#cfcfcf"/><line x1="36" y1="236.5" x2="38" y2="236.5" stroke="#cfcfcf"/><line x1="36" y1="242.5" x2="38" y2="242.5" stroke="#cfcfcf"/><line x1="36" y1="248.5" x2="38" y2="248.5" stroke="#cfcfcf"/><line x1="34.5" y1="254.5" x2="38" y2="254.5" stroke="#8a8a8a"/><line x1="36" y1="260.5" x2="38" y2="260.5" stroke="#cfcfcf"/><line x1="36" y1="265.5" x2="38" y2="265.5" stroke="#cfcfcf"/><line x1="36" y1="271.5" x2="38" y2="271.5" stroke="#cfcfcf"/><line x1="36" y1="277.5" x2="38" y2="277.5" stroke="#cfcfcf"/><line x1="35.5" y1="283.5" x2="37.5" y2="283.5" stroke="#999"/><line x1="36" y1="289.5" x2="38" y2="289.5" stroke="#cfcfcf"/><line x1="36" y1="295.5" x2="38" y2="295.5" stroke="#cfcfcf"/><line x1="36" y1="301.5" x2="38" y2="301.5" stroke="#cfcfcf"/><line x1="36" y1="307.5" x2="38" y2="307.5" stroke="#cfcfcf"/><line x1="34.5" y1="313.5" x2="38" y2="313.5" stroke="#8a8a8a"/><line x1="36" y1="319.5" x2="38" y2="319.5" stroke="#cfcfcf"/><line x1="36" y1="324.5" x2="38" y2="324.5" stroke="#cfcfcf"/><line x1="36" y1="330.5" x2="38" y2="330.5" stroke="#cfcfcf"/><line x1="36" y1="336.5" x2="38" y2="336.5" stroke="#cfcfcf"/><line x1="35.5" y1="342.5" x2="37.5" y2="342.5" stroke="#999"/><line x1="36" y1="348.5" x2="38" y2="348.5" stroke="#cfcfcf"/><line x1="36" y1="354.5" x2="38" y2="354.5" stroke="#cfcfcf"/><line x1="36" y1="360.5" x2="38" y2="360.5" stroke="#cfcfcf"/><line x1="36" y1="366.5" x2="38" y2="366.5" stroke="#cfcfcf"/><line x1="34.5" y1="372.5" x2="38" y2="372.5" stroke="#8a8a8a"/><line x1="36" y1="378.5" x2="38" y2="378.5" stroke="#cfcfcf"/><line x1="36" y1="383.5" x2="38" y2="383.5" stroke="#cfcfcf"/><line x1="36" y1="389.5" x2="38" y2="389.5" stroke="#cfcfcf"/><line x1="36" y1="395.5" x2="38" y2="395.5" stroke="#cfcfcf"/><line x1="35.5" y1="401.5" x2="37.5" y2="401.5" stroke="#999"/><line x1="36" y1="407.5" x2="38" y2="407.5" stroke="#cfcfcf"/><line x1="36" y1="413.5" x2="38" y2="413.5" stroke="#cfcfcf"/><line x1="36" y1="419.5" x2="38" y2="419.5" stroke="#cfcfcf"/><line x1="36" y1="425.5" x2="38" y2="425.5" stroke="#cfcfcf"/><line x1="34.5" y1="431.5" x2="38" y2="431.5" stroke="#8a8a8a"/><line x1="36" y1="437.5" x2="38" y2="437.5" stroke="#cfcfcf"/><line x1="36" y1="442.5" x2="38" y2="442.5" stroke="#cfcfcf"/><line x1="36" y1="448.5" x2="38" y2="448.5" stroke="#cfcfcf"/><line x1="36" y1="454.5" x2="38" y2="454.5" stroke="#cfcfcf"/><line x1="35.5" y1="460.5" x2="37.5" y2="460.5" stroke="#999"/><line x1="36" y1="466.5" x2="38" y2="466.5" stroke="#cfcfcf"/><line x1="36" y1="472.5" x2="38" y2="472.5" stroke="#cfcfcf"/><line x1="36" y1="478.5" x2="38" y2="478.5" stroke="#cfcfcf"/><line x1="36" y1="484.5" x2="38" y2="484.5" stroke="#cfcfcf"/><line x1="34.5" y1="490.5" x2="38" y2="490.5" stroke="#8a8a8a"/><line x1="36" y1="496.5" x2="38" y2="496.5" stroke="#cfcfcf"/><line x1="36" y1="501.5" x2="38" y2="501.5" stroke="#cfcfcf"/><line x1="36" y1="507.5" x2="38" y2="507.5" stroke="#cfcfcf"/><line x1="36" y1="513.5" x2="38" y2="513.5" stroke="#cfcfcf"/><line x1="35.5" y1="519.5" x2="37.5" y2="519.5" stroke="#999"/><line x1="36" y1="525.5" x2="38" y2="525.5" stroke="#cfcfcf"/><line x1="36" y1="531.5" x2="38" y2="531.5" stroke="#cfcfcf"/><line x1="36" y1="537.5" x2="38" y2="537.5" stroke="#cfcfcf"/><line x1="36" y1="543.5" x2="38" y2="543.5" stroke="#cfcfcf"/><line x1="34.5" y1="549.5" x2="38" y2="549.5" stroke="#8a8a8a"/><line x1="36" y1="555.5" x2="38" y2="555.5" stroke="#cfcfcf"/><line x1="36" y1="560.5" x2="38" y2="560.5" stroke="#cfcfcf"/><line x1="36" y1="566.5" x2="38" y2="566.5" stroke="#cfcfcf"/><line x1="36" y1="572.5" x2="38" y2="572.5" stroke="#cfcfcf"/><line x1="35.5" y1="578.5" x2="37.5" y2="578.5" stroke="#999"/><line x1="36" y1="584.5" x2="38" y2="584.5" stroke="#cfcfcf"/><line x1="36" y1="590.5" x2="38" y2="590.5" stroke="#cfcfcf"/><line x1="36" y1="596.5" x2="38" y2="596.5" stroke="#cfcfcf"/><line x1="36" y1="602.5" x2="38" y2="602.5" stroke="#cfcfcf"/><line x1="34.5" y1="608.5" x2="38" y2="608.5" stroke="#8a8a8a"/><line x1="36" y1="614.5" x2="38" y2="614.5" stroke="#cfcfcf"/><line x1="36" y1="620.5" x2="38" y2="620.5" stroke="#cfcfcf"/><line x1="36" y1="625.5" x2="38" y2="625.5" stroke="#cfcfcf"/><line x1="36" y1="631.5" x2="38" y2="631.5" stroke="#cfcfcf"/><line x1="35.5" y1="637.5" x2="37.5" y2="637.5" stroke="#999"/><line x1="36" y1="643.5" x2="38" y2="643.5" stroke="#cfcfcf"/><line x1="36" y1="649.5" x2="38" y2="649.5" stroke="#cfcfcf"/><line x1="36" y1="655.5" x2="38" y2="655.5" stroke="#cfcfcf"/><line x1="36" y1="661.5" x2="38" y2="661.5" stroke="#cfcfcf"/><line x1="34.5" y1="667.5" x2="38" y2="667.5" stroke="#8a8a8a"/><line x1="36" y1="673.5" x2="38" y2="673.5" stroke="#cfcfcf"/><line x1="36" y1="678.5" x2="38" y2="678.5" stroke="#cfcfcf"/><line x1="36" y1="684.5" x2="38" y2="684.5" stroke="#cfcfcf"/><line x1="36" y1="690.5" x2="38" y2="690.5" stroke="#cfcfcf"/><line x1="35.5" y1="696.5" x2="37.5" y2="696.5" stroke="#999"/><line x1="36" y1="702.5" x2="38" y2="702.5" stroke="#cfcfcf"/><line x1="36" y1="708.5" x2="38" y2="708.5" stroke="#cfcfcf"/></g><g font-family="Liberation Sans" font-size="7.8" fill="#707070"><text transform="translate(33.5 136.0) rotate(-90)" text-anchor="middle">260</text><text transform="translate(33.5 195.0) rotate(-90)" text-anchor="middle">240</text><text transform="translate(33.5 254.0) rotate(-90)" text-anchor="middle">220</text><text transform="translate(33.5 313.0) rotate(-90)" text-anchor="middle">200</text><text transform="translate(33.5 372.0) rotate(-90)" text-anchor="middle">180</text><text transform="translate(33.5 431.0) rotate(-90)" text-anchor="middle">160</text><text transform="translate(33.5 490.0) rotate(-90)" text-anchor="middle">140</text><text transform="translate(33.5 549.0) rotate(-90)" text-anchor="middle">120</text><text transform="translate(33.5 608.0) rotate(-90)" text-anchor="middle">100</text><text transform="translate(33.5 667.0) rotate(-90)" text-anchor="middle">80</text></g></svg>
<div class="a" style="left:39px;top:122px;width:934px;height:603px;background:#fff"></div>
<div class="a" style="left:39px;top:122px;width:1px;height:589px;background:#eeeeee"></div>
<div class="a" style="left:39px;top:122px;width:934px;height:1px;background:#eeeeee"></div>
<div class="a" style="left:171px;top:122px;width:1px;height:589px;background:#c4c4c4"></div>
<div class="a" style="left:791px;top:122px;width:6px;height:589px;background:#bebebe"></div>
<svg style="left:0;top:0" width="1000" height="769"><path d="M321.5 461.5 L321.5 357.5 L387 357.5 A185 185 0 0 1 597 359.5 L662.5 359.5 L662.5 460.5 L647.5 460.5 L647.5 373.5 L591.5 373.5 A172 172 0 0 0 391 372.5 L335.5 372.5 L335.5 461.5 Z" fill="none" stroke="#6a6a6a" stroke-width="1"/></svg>
<div class="a" style="left:973px;top:122px;width:12px;height:590px;background:#fff"></div>
<div class="a" style="left:973px;top:122px;width:12px;height:13px;background:#ececec"></div>
<svg style="left:976px;top:127px" width="6" height="3" viewBox="0 0 6 3" ><path d="M0 3 H6 L3.0 0Z" fill="#222"/></svg>
<div class="a" style="left:973px;top:315px;width:11px;height:175px;background:linear-gradient(90deg,#f7f7f7,#d8d8d8 70%,#c4c4c4);border:1px solid #c0c0c0;border-radius:1px"></div>
<svg style="left:975px;top:400px" width="6" height="5"><path d="M0 0.5 H6 M0 2.5 H6 M0 4.5 H6" stroke="#555"/></svg>
<div class="a" style="left:973px;top:698px;width:12px;height:13px;background:#eeeeee"></div>
<svg style="left:976px;top:704px" width="6" height="3" viewBox="0 0 6 3" ><path d="M0 0 H6 L3.0 3Z" fill="#222"/></svg>
<div class="a" style="left:985px;top:91px;width:15px;height:648px;background:#f3f3f3;border-left:1px solid #dcdcdc"></div>
<svg style="left:987px;top:93px" width="12" height="6"><path d="M0 1.5 h1 M3 1.5 h1 M6 1.5 h1 M9 1.5 h1 M1.5 4 h1 M4.5 4 h1 M7.5 4 h1 M10.5 4 h1" stroke="#c4c4c4"/></svg>
<svg style="left:991px;top:100px" width="5" height="8"><path d="M0 0 L5 4 L0 8Z" fill="#111"/></svg>
<svg style="left:988px;top:111px" width="9" height="8"><path d="M1 7 L7 1" stroke="#c8c8c8" stroke-width="1.5"/></svg>
<svg style="left:988px;top:124px" width="10" height="6"><path d="M0.5 5.5 L5 1 L9.5 5.5" stroke="#ccc" fill="none"/></svg>
<div class="a" style="left:985px;top:135px;width:15px;height:571px;background:#6a6a6a"></div>
<div class="a" style="left:986px;top:136px;width:13px;height:12px;background:#fff"></div>
<svg style="left:986px;top:136px" width="13" height="12"><path d="M1 1 L12 11 M12 1 L1 11" stroke="#333" stroke-width="1"/></svg>
<div class="a" style="left:986px;top:149.28px;width:13px;height:12.28px;background:#2a211c"></div>
<div class="a" style="left:986px;top:162.56px;width:13px;height:12.28px;background:#3f3a39"></div>
<div class="a" style="left:986px;top:175.84px;width:13px;height:12.28px;background:#595757"></div>
<div class="a" style="left:986px;top:189.12px;width:13px;height:12.28px;background:#727171"></div>
<div class="a" style="left:986px;top:202.40px;width:13px;height:12.28px;background:#898989"></div>
<div class="a" style="left:986px;top:215.67px;width:13px;height:12.28px;background:#9fa0a0"></div>
<div class="a" style="left:986px;top:228.95px;width:13px;height:12.28px;background:#b5b5b6"></div>
<div class="a" style="left:986px;top:242.23px;width:13px;height:12.28px;background:#c9caca"></div>
<div class="a" style="left:986px;top:255.51px;width:13px;height:12.28px;background:#dcdddd"></div>
<div class="a" style="left:986px;top:268.79px;width:13px;height:12.28px;background:#efefef"></div>
<div class="a" style="left:986px;top:282.07px;width:13px;height:12.28px;background:#ffffff"></div>
<div class="a" style="left:986px;top:295.35px;width:13px;height:12.28px;background:#1d2088"></div>
<div class="a" style="left:986px;top:308.63px;width:13px;height:12.28px;background:#00a0e9"></div>
<div class="a" style="left:986px;top:321.91px;width:13px;height:12.28px;background:#009944"></div>
<div class="a" style="left:986px;top:335.19px;width:13px;height:12.28px;background:#fff100"></div>
<div class="a" style="left:986px;top:348.47px;width:13px;height:12.28px;background:#e60012"></div>
<div class="a" style="left:986px;top:361.74px;width:13px;height:12.28px;background:#e4007f"></div>
<div class="a" style="left:986px;top:375.02px;width:13px;height:12.28px;background:#a84290"></div>
<div class="a" style="left:986px;top:388.30px;width:13px;height:12.28px;background:#f08300"></div>
<div class="a" style="left:986px;top:401.58px;width:13px;height:12.28px;background:#f5b2b2"></div>
<div class="a" style="left:986px;top:414.86px;width:13px;height:12.28px;background:#8a7a70"></div>
<div class="a" style="left:986px;top:428.14px;width:13px;height:12.28px;background:#d0cde8"></div>
<div class="a" style="left:986px;top:441.42px;width:13px;height:12.28px;background:#a899cc"></div>
<div class="a" style="left:986px;top:454.70px;width:13px;height:12.28px;background:#6e8ac8"></div>
<div class="a" style="left:986px;top:467.98px;width:13px;height:12.28px;background:#7a67b0"></div>
<div class="a" style="left:986px;top:481.26px;width:13px;height:12.28px;background:#8e80b0"></div>
<div class="a" style="left:986px;top:494.53px;width:13px;height:12.28px;background:#4f6394"></div>
<div class="a" style="left:986px;top:507.81px;width:13px;height:12.28px;background:#57506f"></div>
<div class="a" style="left:986px;top:521.09px;width:13px;height:12.28px;background:#6c84a0"></div>
<div class="a" style="left:986px;top:534.37px;width:13px;height:12.28px;background:#008fe0"></div>
<div class="a" style="left:986px;top:547.65px;width:13px;height:12.28px;background:#9fd8f5"></div>
<div class="a" style="left:986px;top:560.93px;width:13px;height:12.28px;background:#b4ccd8"></div>
<div class="a" style="left:986px;top:574.21px;width:13px;height:12.28px;background:#94a6ae"></div>
<div class="a" style="left:986px;top:587.49px;width:13px;height:12.28px;background:#6f8089"></div>
<div class="a" style="left:986px;top:600.77px;width:13px;height:12.28px;background:#4c5760"></div>
<div class="a" style="left:986px;top:614.05px;width:13px;height:12.28px;background:#4f6e6e"></div>
<div class="a" style="left:986px;top:627.33px;width:13px;height:12.28px;background:#3a8a7a"></div>
<div class="a" style="left:986px;top:640.60px;width:13px;height:12.28px;background:#6a9a9a"></div>
<div class="a" style="left:986px;top:653.88px;width:13px;height:12.28px;background:#4aa090"></div>
<div class="a" style="left:986px;top:667.16px;width:13px;height:12.28px;background:#4f9a6a"></div>
<div class="a" style="left:986px;top:680.44px;width:13px;height:12.28px;background:#56c0d0"></div>
<div class="a" style="left:986px;top:693.72px;width:13px;height:12.28px;background:#44a0b0"></div>
<svg style="left:988px;top:710px" width="10" height="6"><path d="M0.5 0.5 L5 5 L9.5 0.5" stroke="#bbb" fill="none"/></svg>
<svg style="left:989px;top:723px" width="9" height="8"><path d="M0.5 0.5 L4 4 L0.5 7.5 M4.5 0.5 L8 4 L4.5 7.5" stroke="#bbb" fill="none"/></svg>
<div class="a" style="left:39px;top:711px;width:474px;height:1px;background:#9a9a9a"></div>
<div class="a" style="left:39px;top:712px;width:473px;height:13px;background:#f3f3f3"></div>
<div class="a" style="left:512px;top:711px;width:1px;height:14px;background:#9a9a9a"></div>
<div class="a" style="left:513px;top:712px;width:13px;height:13px;background:#ebebeb"></div>
<svg style="left:518px;top:715px" width="4" height="7"><path d="M4 0 L0 3.5 L4 7Z" fill="#333"/></svg>
<div class="a" style="left:575px;top:712px;width:158px;height:12px;background:linear-gradient(180deg,#f2f2f2,#e0e0e0 50%,#c6c6c6);border:1px solid #aaa;border-radius:2px"></div>
<svg style="left:651px;top:714px" width="6" height="6"><path d="M0.5 0 V6 M2.5 0 V6 M4.5 0 V6" stroke="#444"/></svg>
<div class="a" style="left:959px;top:712px;width:13px;height:13px;background:#e8e8e8"></div>
<svg style="left:964px;top:715px" width="4" height="6"><path d="M0 0 L3.5 3 L0 6Z" fill="#333"/></svg>
<div class="a" style="left:972px;top:712px;width:13px;height:13px;background:#fff"></div>
<svg style="left:974px;top:713px" width="10" height="10"><circle cx="4" cy="3.8" r="3" fill="none" stroke="#555" stroke-width="1.1"/><path d="M6.2 6 L8.8 8.6" stroke="#444" stroke-width="1.4"/><path d="M4 2.3 V5.3 M2.5 3.8 H5.5" stroke="#999" stroke-width="0.7"/></svg>
<svg style="left:150px;top:711px" width="45" height="14"><path d="M4.5 0.5 L8.5 13.5 H36.5 L40.5 0.5" fill="#fff" stroke="#999"/><path d="M5 0.5 H40" stroke="#fff"/></svg>
<div class="a" style="left:172px;top:711px;width:1px;height:1px;background:#9a9a9a"></div>
<div class="t" id="t26" style="left:163px;top:711px;font-size:10px;color:#222;transform:scaleX(1.0281);">页1</div>
<svg style="left:41px;top:713px" width="9" height="10"><rect x="0.5" y="2.5" width="7" height="7" fill="none" stroke="#777"/><path d="M2 0.5 H8.5 V7" fill="none" stroke="#777"/><path d="M4 4 V8 M2 6 H6" stroke="#777"/></svg>
<svg style="left:55px;top:714px" width="8" height="9"><path d="M0.5 0 V9" stroke="#bbb"/><path d="M8 0 L2 4.5 L8 9Z" fill="#bbb"/></svg>
<svg style="left:67px;top:714px" width="6" height="9"><path d="M6 0 L0 4.5 L6 9Z" fill="#bbb"/></svg>
<div class="t" id="t27" style="left:78px;top:714px;font-size:10px;color:#222;transform:scaleX(0.8682);">1 &nbsp;的 &nbsp;1</div>
<svg style="left:114px;top:714px" width="6" height="9"><path d="M0 0 L6 4.5 L0 9Z" fill="#bbb"/></svg>
<svg style="left:124px;top:714px" width="8" height="9"><path d="M7.5 0 V9" stroke="#bbb"/><path d="M0 0 L6 4.5 L0 9Z" fill="#bbb"/></svg>
<svg style="left:139px;top:713px" width="9" height="10"><rect x="0.5" y="2.5" width="7" height="7" fill="none" stroke="#777"/><path d="M2 0.5 H8.5 V7" fill="none" stroke="#777"/><path d="M4 4 V8 M2 6 H6" stroke="#777"/></svg>
<svg style="left:507px;top:713px" width="5" height="11"><path d="M1 1 h1 M3 3 h1 M1 5 h1 M3 7 h1 M1 9 h1" stroke="#ccc"/></svg>
<div class="a" style="left:25px;top:725px;width:960px;height:14px;background:#f3f3f3;border-top:1px solid #dcdcdc"></div>
<svg style="left:25px;top:727px" width="5" height="11"><path d="M1 1 h1 M3 3 h1 M1 5 h1 M3 7 h1 M1 9 h1" stroke="#ccc"/></svg>
<svg style="left:35px;top:729px" width="4" height="7"><path d="M0 0 L4 3.5 L0 7Z" fill="#111"/></svg>
<svg style="left:45px;top:727px" width="7" height="8"><path d="M1 7 L6 1" stroke="#6b4a3a" stroke-width="1.5"/></svg>
<svg style="left:58px;top:728px" width="5" height="9"><path d="M4.5 0.5 L0.5 4.5 L4.5 8.5" stroke="#ccc" fill="none"/></svg>
<div class="a" style="left:67px;top:725px;width:15px;height:15px;background:#fff;border:1px solid #888"></div>
<svg style="left:68px;top:726px" width="13" height="13"><path d="M0 0 L13 13 M13 0 L0 13" stroke="#333"/></svg>
<div class="t" id="t28" style="left:394px;top:727px;font-size:9px;color:#b0b0b0;font-style:italic;transform:scaleX(1.0361);">将颜色(或对象)拖动至此处，以便将这些颜色与文档存储在一起</div>
<svg style="left:956px;top:728px" width="5" height="9"><path d="M0.5 0.5 L4.5 4.5 L0.5 8.5" stroke="#ccc" fill="none"/></svg>
<svg style="left:968px;top:729px" width="9" height="7"><path d="M0.5 0.5 L4 3.5 L0.5 6.5 M4.5 0.5 L8 3.5 L4.5 6.5" stroke="#ccc" fill="none"/></svg>
<div class="a" style="left:0px;top:739px;width:1000px;height:1px;background:#dcdcdc"></div>
<div class="a" style="left:0px;top:740px;width:1000px;height:29px;background:#f3f3f3"></div>
<div class="t" id="t29" style="left:6px;top:749px;font-size:10px;color:#222;transform:scaleX(0.8401);">( 38.678, 196.594 )</div>
<svg style="left:95px;top:752px" width="4" height="6"><path d="M0 0 L4 3 L0 6Z" fill="#111"/></svg>
<svg style="left:643px;top:748px" width="14" height="14"><rect x="0.5" y="0.5" width="13" height="10" fill="#555"/><rect x="1.5" y="1.5" width="11" height="4" fill="#f23a3a"/><rect x="1.5" y="5.5" width="11" height="4" fill="#3aaaf0"/><circle cx="7" cy="5.5" r="1.8" fill="#888"/><rect x="3" y="12" width="8" height="1.5" fill="#777"/></svg>
<svg style="left:670px;top:748px" width="13" height="14"><path d="M1 7 L6.5 1.5 L12 7 L6.5 12.5Z" fill="#fff" stroke="#222" stroke-width="1.3"/><path d="M4 8 H9 L6.5 10.5Z" fill="#e00"/><path d="M12 9 V13 H8Z" fill="#e00"/></svg>
<div class="a" style="left:684px;top:745px;width:17px;height:17px;background:#fff;border:1px solid #bbb"></div>
<svg style="left:685px;top:746px" width="15" height="15"><path d="M0 0 L15 15 M15 0 L0 15" stroke="#222" stroke-width="1.2"/></svg>
<div class="t" id="t30" style="left:704px;top:748px;font-size:10px;color:#222;transform:scaleX(0.9000);">无</div>
<div class="a" style="left:823px;top:746px;width:1px;height:16px;background:#dcdcdc"></div>
<svg style="left:836px;top:748px" width="8" height="13"><path d="M4 0.5 L7 6 L5.5 8 V12 H2.5 V8 L1 6Z" fill="#fff" stroke="#444"/><path d="M4 1 V7" stroke="#444"/></svg>
<div class="a" style="left:846px;top:746px;width:16px;height:16px;background:#231815"></div>
<div class="t" id="t31" style="left:865px;top:749px;font-size:10px;color:#222;transform:scaleX(0.8787);">C: 0 M: 0 Y: 0 K: 100 &nbsp;.200 mm</div>
<svg style="left:0;top:0" width="1000" height="769">
<g fill="#fff" stroke="#d4d4d4" stroke-width="2" paint-order="stroke" stroke-linejoin="round" fill-opacity="0.9">
<text x="768" y="717" font-family="Liberation Sans" font-weight="bold" font-size="42" textLength="59" lengthAdjust="spacingAndGlyphs">Bai</text>
<ellipse cx="835" cy="683.5" rx="7" ry="9"/><ellipse cx="848" cy="671.5" rx="7" ry="9"/><ellipse cx="863.5" cy="672.5" rx="7" ry="9"/><ellipse cx="873.5" cy="687.5" rx="7" ry="9"/>
<path d="M855 684.5 C849 684.5 846 689 842 695 C838 701 832 705 832 711.5 C832 717 836 719 842 718.8 C847 718.5 851 717.5 855 717.5 C859 717.5 863 718.5 868 718.8 C874 719 878 717 878 711.5 C878 705 872 701 868 695 C864 689 861 684.5 855 684.5Z"/>
<text x="839" y="713" font-family="Liberation Sans" font-size="25" textLength="28" lengthAdjust="spacingAndGlyphs">du</text>
<text x="881" y="715" font-weight="bold" font-size="31" textLength="62" lengthAdjust="spacingAndGlyphs">经验</text>
<text x="768" y="740" font-family="Liberation Sans" font-size="18" textLength="177" lengthAdjust="spacingAndGlyphs">jingyan.baidu.com</text>
</g></svg></body></html>
